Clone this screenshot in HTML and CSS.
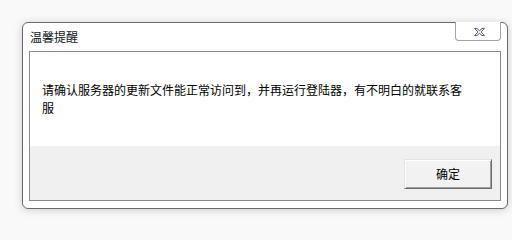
FILE: index.html
```html
<!DOCTYPE html>
<html lang="zh-CN">
<head>
<meta charset="utf-8">
<title>温馨提醒</title>
<link rel="stylesheet" href="styles.css">
</head>
<body>
  <div class="window">
    <div class="titlebar">
      <span class="title">温馨提醒</span>
      <div class="close">
        <svg width="13" height="10" viewBox="0 0 13 10">
          <path d="M1.5 1.5 L4 1.5 L6.5 3.6 L9 1.5 L11.5 1.5 L8 5 L11.5 8.5 L9 8.5 L6.5 6.4 L4 8.5 L1.5 8.5 L5 5 Z" fill="#eef0f3" stroke="#5a6270" stroke-width="1" stroke-linejoin="round"/>
        </svg>
      </div>
    </div>
    <div class="panel">
      <div class="message">
        <p class="text">请确认服务器的更新文件能正常访问到，并再运行登陆器，有不明白的就联系客服</p>
      </div>
      <div class="footer">
        <button class="btn">确定</button>
      </div>
    </div>
  </div>
</body>
</html>
```

FILE: styles.css
```css
html, body {
  margin: 0;
  padding: 0;
}
body {
  width: 512px;
  height: 218px;
  background: #f9f9f9;
  font-family: "Noto Sans CJK SC", "Noto Sans", sans-serif;
  font-size: 12px;
  color: #000;
  padding: 22px 0 0 22px;
  box-sizing: border-box;
  overflow: hidden;
}
.window {
  width: 486px;
  height: 187px;
  box-sizing: border-box;
  border: 1px solid #6a6a6a;
  border-radius: 6px;
  background: #fff;
  padding: 0 6px 7px 6px;
  display: flex;
  flex-direction: column;
  box-shadow: 0 1px 8px rgba(0, 0, 0, 0.18);
}
.titlebar {
  height: 28px;
  display: flex;
  justify-content: space-between;
  align-items: flex-start;
  flex: none;
}
.title {
  align-self: center;
  padding-left: 1px;
  line-height: 14px;
  color: #101820;
}
.close {
  width: 46px;
  height: 19px;
  box-sizing: border-box;
  margin-top: -1px;
  margin-right: 0;
  border: 1px solid #a3a3a3;
  border-top: none;
  border-radius: 0 0 4px 4px;
  background: #fff;
  display: flex;
  justify-content: center;
  align-items: center;
  padding-top: 2px;
  padding-left: 3px;
}
.close svg {
  display: block;
}
.panel {
  flex: 1;
  border: 1px solid #8a8a8a;
  display: flex;
  flex-direction: column;
}
.message {
  height: 94px;
  background: #fff;
  padding: 29px 0 0 12px;
  box-sizing: border-box;
  flex: none;
}
.text {
  margin: 0;
  width: 426px;
  line-height: 18px;
}
.footer {
  flex: 1;
  background: #f0f0f0;
  display: flex;
  justify-content: flex-end;
  align-items: center;
  padding-right: 8px;
}
.btn {
  width: 88px;
  height: 30px;
  box-sizing: border-box;
  font-family: "Noto Sans CJK SC", "Noto Sans", sans-serif;
  font-size: 12px;
  color: #000;
  background: #f2f2f2;
  border: 1px solid;
  border-color: #e3e3e3 #6b6b6b #6b6b6b #e3e3e3;
  box-shadow: inset 1px 1px 0 #fff, inset -1px -1px 0 #a0a0a0;
  padding: 0;
  margin-top: 1px;
}
```
